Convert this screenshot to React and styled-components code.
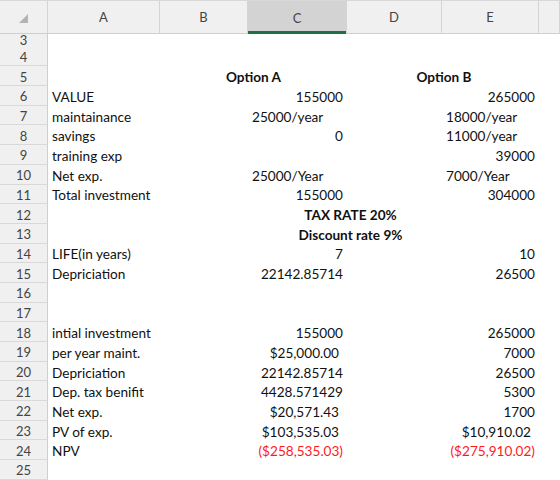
import React from 'react';
import styled, { createGlobalStyle } from 'styled-components';

const Global = createGlobalStyle`
  html, body {
    margin: 0;
    padding: 0;
    background: #fff;
    overflow: hidden;
  }
  body {
    font-family: Lato, "Liberation Sans", sans-serif;
  }
`;

const COLS = '48px 112px 88px 99px 95px 97px 1fr';

const Sheet = styled.div`
  width: 560px;
  height: 480px;
  overflow: hidden;
  display: flex;
  flex-direction: column;
`;

const HeaderRow = styled.div`
  display: grid;
  grid-template-columns: ${COLS};
  height: 34px;
  flex: none;
  background: #f0f0f0;
  border-top: 1px solid #d8d8d8;
  border-bottom: 1px solid #cfcfcf;
  box-sizing: border-box;
`;

const Corner = styled.div`
  position: relative;
  border-right: 1px solid #d4d4d4;
  svg {
    position: absolute;
    left: 19px;
    top: 13px;
  }
`;

const ColHead = styled.div`
  display: flex;
  align-items: center;
  justify-content: center;
  font-size: 13px;
  color: #444;
  border-right: 1px solid #d4d4d4;
  background: ${p => (p.$active ? '#d3d3d3' : 'transparent')};
  box-shadow: ${p => (p.$active ? 'inset 0 -3px 0 #1e7145' : 'none')};
  margin-bottom: ${p => (p.$active ? '-1px' : '0')};
`;

const Row = styled.div`
  display: grid;
  grid-template-columns: ${COLS};
  height: ${p => p.$h || 19.7}px;
  flex: none;
  overflow: hidden;
`;

const RowNum = styled.div`
  grid-column: 1;
  grid-row: 1;
  box-sizing: border-box;
  display: flex;
  align-items: center;
  justify-content: center;
  padding-top: ${p => (p.$short ? 0 : 3)}px;
  font-size: 13px;
  line-height: 1;
  color: #444;
  background: #f0f0f0;
  border-right: 1px solid #cfcfcf;
  border-bottom: 1px solid #d9d9d9;
`;

const Cell = styled.div`
  grid-column: ${p => p.$col} / span ${p => p.$span || 1};
  grid-row: 1;
  display: flex;
  align-items: center;
  justify-content: ${p =>
    p.$align === 'right' ? 'flex-end' : p.$align === 'center' ? 'center' : 'flex-start'};
  padding: 2px ${p => p.$pr ?? 4}px 0 ${p => p.$pl ?? 4}px;
  font-size: 13.6px;
  font-weight: ${p => (p.$bold ? 700 : 400)};
  color: ${p => (p.$red ? '#ff1a1a' : '#111')};
  white-space: nowrap;
  overflow: visible;
`;

const R = 'right';
const L = 'left';

const rows = [
  { n: 3, h: 12.7, cells: [] },
  { n: 4, cells: [] },
  {
    n: 5,
    cells: [
      { col: 3, span: 2, text: 'Option A', align: 'center', bold: true },
      { col: 5, span: 2, text: 'Option B', align: 'center', bold: true, pl: 6 },
    ],
  },
  { n: 6, a: 'VALUE', c: ['155000', R], e: ['265000', R] },
  { n: 7, a: 'maintainance', c: ['25000/year', L], e: ['18000/year', L] },
  { n: 8, a: 'savings', c: ['0', R], e: ['11000/year', L] },
  { n: 9, a: 'training exp', e: ['39000', R] },
  { n: 10, a: 'Net exp.', c: ['25000/Year', L], e: ['7000/Year', L] },
  { n: 11, a: 'Total investment', c: ['155000', R], e: ['304000', R] },
  { n: 12, cells: [{ col: 4, span: 2, text: 'TAX RATE 20%', align: 'center', bold: true, pl: 15 }] },
  { n: 13, cells: [{ col: 4, span: 2, text: 'Discount rate 9%', align: 'center', bold: true, pl: 15 }] },
  { n: 14, a: 'LIFE(in years)', c: ['7', R], e: ['10', R] },
  { n: 15, a: 'Depriciation', c: ['22142.85714', R], e: ['26500', R] },
  { n: 16 },
  { n: 17 },
  { n: 18, a: 'intial investment', c: ['155000', R], e: ['265000', R] },
  { n: 19, a: 'per year maint.', c: ['$25,000.00', R, 8], e: ['7000', R] },
  { n: 20, a: 'Depriciation', c: ['22142.85714', R], e: ['26500', R] },
  { n: 21, a: 'Dep. tax benifit', c: ['4428.571429', R], e: ['5300', R] },
  { n: 22, a: 'Net exp.', c: ['$20,571.43', R, 8], e: ['1700', R] },
  { n: 23, a: 'PV of exp.', c: ['$103,535.03', R, 8], e: ['$10,910.02', R, 8] },
  { n: 24, a: 'NPV', c: ['($258,535.03)', R, 4, true], e: ['($275,910.02)', R, 4, true] },
  { n: 25 },
];

function cellsFor(r) {
  if (r.cells) return r.cells;
  const out = [];
  if (r.a) out.push({ col: 2, text: r.a, align: L });
  if (r.c) out.push({ col: 4, text: r.c[0], align: r.c[1], pr: r.c[2], red: r.c[3] });
  if (r.e) out.push({ col: 6, text: r.e[0], align: r.e[1], pr: r.e[2], red: r.e[3] });
  return out;
}

function App() {
  return (
    <>
      <Global />
      <Sheet>
        <HeaderRow>
          <Corner>
            <svg width="9" height="9" viewBox="0 0 9 9">
              <polygon points="9,0 9,9 0,9" fill="#b3b3b3" />
            </svg>
          </Corner>
          <ColHead>A</ColHead>
          <ColHead>B</ColHead>
          <ColHead $active>C</ColHead>
          <ColHead>D</ColHead>
          <ColHead>E</ColHead>
          <ColHead />
        </HeaderRow>
        {rows.map(r => (
          <Row key={r.n} $h={r.h}>
            <RowNum $short={!!r.h}>{r.n}</RowNum>
            {cellsFor(r).map((c, i) => (
              <Cell
                key={i}
                $col={c.col}
                $span={c.span}
                $align={c.align}
                $bold={c.bold}
                $red={c.red}
                $pr={c.pr}
                $pl={c.pl}
              >
                {c.text}
              </Cell>
            ))}
          </Row>
        ))}
      </Sheet>
    </>
  );
}

export default App;
